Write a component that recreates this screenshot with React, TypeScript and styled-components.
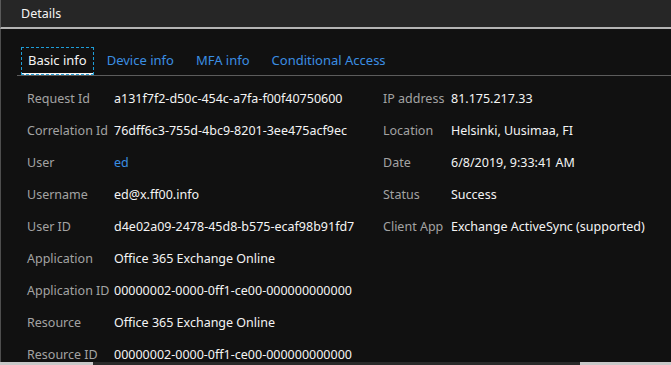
import React from 'react'
import styled, { createGlobalStyle } from 'styled-components'

const GlobalStyle = createGlobalStyle`
  html, body {
    margin: 0;
    padding: 0;
    background: #111111;
  }
  body {
    font-family: 'Noto Sans', 'Liberation Sans', sans-serif;
    font-size: 12.5px;
    color: #f2f2f2;
  }
`

type Field = { label: string; value: string; link?: boolean }

const leftFields: Field[] = [
  { label: 'Request Id', value: 'a131f7f2-d50c-454c-a7fa-f00f40750600' },
  { label: 'Correlation Id', value: '76dff6c3-755d-4bc9-8201-3ee475acf9ec' },
  { label: 'User', value: 'ed', link: true },
  { label: 'Username', value: 'ed@x.ff00.info' },
  { label: 'User ID', value: 'd4e02a09-2478-45d8-b575-ecaf98b91fd7' },
  { label: 'Application', value: 'Office 365 Exchange Online' },
  { label: 'Application ID', value: '00000002-0000-0ff1-ce00-000000000000' },
  { label: 'Resource', value: 'Office 365 Exchange Online' },
  { label: 'Resource ID', value: '00000002-0000-0ff1-ce00-000000000000' },
]

const rightFields: Field[] = [
  { label: 'IP address', value: '81.175.217.33' },
  { label: 'Location', value: 'Helsinki, Uusimaa, FI' },
  { label: 'Date', value: '6/8/2019, 9:33:41 AM' },
  { label: 'Status', value: 'Success' },
  { label: 'Client App', value: 'Exchange ActiveSync (supported)' },
]

const tabs = ['Basic info', 'Device info', 'MFA info', 'Conditional Access']

export default function App() {
  return (
    <>
      <GlobalStyle />
      <Panel>
        <TitleBar>Details</TitleBar>
        <Body>
          <TabList>
            {tabs.map((t, i) => (
              <Tab key={t} active={i === 0}>
                {t}
              </Tab>
            ))}
          </TabList>
          <Columns>
            <FieldList labelWidth={87} width={356}>
              {leftFields.map((f) => (
                <React.Fragment key={f.label}>
                  <Label>{f.label}</Label>
                  <Value link={f.link}>{f.value}</Value>
                </React.Fragment>
              ))}
            </FieldList>
            <FieldList labelWidth={68}>
              {rightFields.map((f) => (
                <React.Fragment key={f.label}>
                  <Label>{f.label}</Label>
                  <Value>{f.value}</Value>
                </React.Fragment>
              ))}
            </FieldList>
          </Columns>
        </Body>
        <BottomEdge>
          <EdgeLight width={93} />
          <EdgeDark />
          <EdgeLight width={91} />
        </BottomEdge>
      </Panel>
    </>
  )
}

const Panel = styled.div`
  display: flex;
  flex-direction: column;
  width: 671px;
  height: 365px;
  overflow: hidden;
`

const TitleBar = styled.div`
  display: flex;
  align-items: center;
  height: 27px;
  padding-left: 20px;
  background: #262626;
  border-left: 1px solid #5a5a5a;
  border-bottom: 2px solid #b4b4b4;
  color: #f4f4f4;
  font-size: 12.5px;
`

const Body = styled.div`
  flex: 1;
  min-height: 0;
  overflow: hidden;
  background: #111111;
  border-left: 1px solid #4e4e4e;
`

const TabList = styled.div`
  display: flex;
  gap: 4px;
  margin: 18px 0 0 16px;
  padding-left: 4px;
  border-bottom: 1px solid #5c5c5c;
`

const Tab = styled.div<{ active?: boolean }>`
  display: flex;
  align-items: center;
  height: 26px;
  padding: 0 ${({ active }) => (active ? 7 : 9)}px;
  font-size: 13px;
  color: ${({ active }) => (active ? '#f4f4f4' : '#3b8ee2')};
  border-bottom: 2px solid ${({ active }) => (active ? '#f4f4f4' : 'transparent')};
  outline: ${({ active }) => (active ? '1px dashed #1e9ed8' : 'none')};
  outline-offset: -1px;
  cursor: pointer;
`

const Columns = styled.div`
  display: flex;
  padding: 6px 0 0 26px;
`

const FieldList = styled.div<{ labelWidth: number; width?: number }>`
  display: grid;
  grid-template-columns: ${({ labelWidth }) => labelWidth}px 1fr;
  grid-auto-rows: 32px;
  align-items: center;
  width: ${({ width }) => (width ? `${width}px` : 'auto')};
  flex: ${({ width }) => (width ? 'none' : '1')};
`

const Label = styled.span`
  color: #a3a3a3;
  white-space: nowrap;
`

const Value = styled.span<{ link?: boolean }>`
  color: ${({ link }) => (link ? '#3b8ee2' : '#f4f4f4')};
  white-space: nowrap;
`

const BottomEdge = styled.div`
  display: flex;
  height: 3px;
  flex: none;
`

const EdgeLight = styled.div<{ width: number }>`
  width: ${({ width }) => width}px;
  background: #c8c8c8;
`

const EdgeDark = styled.div`
  flex: 1;
  background: #2a2a2a;
`
